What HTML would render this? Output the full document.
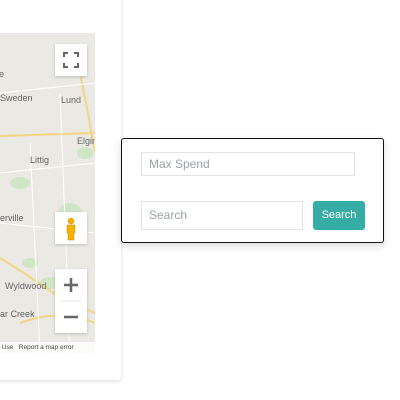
<!DOCTYPE html><html><head><style>
body{margin:0;width:400px;height:400px;background:#fff;position:relative;overflow:hidden;font-family:"Liberation Sans",sans-serif}
.card{position:absolute;left:-10px;top:-10px;width:131px;height:390px;background:#fff;box-shadow:0 1px 4px rgba(0,0,0,.15);border-radius:3px}
.map{position:absolute;left:0;top:33px;width:95px;height:320px;background:#eae9e4;overflow:hidden}
.lbl{position:absolute;font-size:9px;color:#666}
.btn{position:absolute;left:55px;width:32px;background:#fff;box-shadow:0 1px 3px rgba(0,0,0,.2)}
.panel{position:absolute;left:121px;top:138px;width:261px;height:103px;border:1px solid #111;border-radius:3px;background:#fff;box-shadow:0 3px 8px rgba(0,0,0,.15)}
.in{position:absolute;border:1px solid #e1e4e6;font-size:12px;color:#9aa3a8;padding-left:7px;box-sizing:border-box;line-height:22px}
</style></head><body>
<div class="card"></div>
<div class="map">
<svg width="95" height="320" style="position:absolute;left:0;top:0">
<g fill="#cfe5c6"><ellipse cx="70" cy="180" rx="12" ry="10"/><ellipse cx="20" cy="150" rx="10" ry="6"/><ellipse cx="50" cy="250" rx="10" ry="6"/><ellipse cx="85" cy="120" rx="8" ry="6"/><ellipse cx="30" cy="230" rx="8" ry="5"/></g>
<g stroke="#f3d583" stroke-width="2" fill="none"><path d="M0 103 L95 100"/><path d="M80 40 L88 80 L95 120"/><path d="M0 225 Q40 250 60 265 L95 280"/><path d="M20 290 Q60 275 95 290"/></g>
<g stroke="#fff" stroke-width="1" fill="none"><path d="M0 140 L95 130"/><path d="M30 110 L40 320"/><path d="M60 60 L70 320"/><path d="M0 190 L95 200"/><path d="M0 60 L95 50"/></g>
</svg>
<div class="lbl" style="left:-3px;top:36px">le</div>
<div class="lbl" style="left:0;top:60px">Sweden</div>
<div class="lbl" style="left:61px;top:62px">Lund</div>
<div class="lbl" style="left:77px;top:103px">Elgin</div>
<div class="lbl" style="left:30px;top:122px">Littig</div>
<div class="lbl" style="left:0;top:180px">erville</div>
<div class="lbl" style="left:5px;top:248px">Wyldwood</div>
<div class="lbl" style="left:0;top:276px">ar Creek</div>
<div style="position:absolute;left:0;top:309px;width:95px;height:11px;background:rgba(255,255,255,.8);font-size:6.5px;color:#444;line-height:11px;white-space:nowrap">&nbsp;Use &nbsp;&nbsp;Report a map error</div>
</div>
<div class="btn" style="top:44px;height:32px"><svg width="32" height="32"><g stroke="#666" stroke-width="2" fill="none"><path d="M9 13V9h4M19 9h4v4M23 19v4h-4M13 23H9v-4"/></g></svg></div>
<div class="btn" style="top:212px;height:32px"><svg width="32" height="32"><g fill="#f5b200" stroke="#c88a00" stroke-width=".5"><circle cx="16" cy="9" r="3"/><path d="M12 13h8v8h-1v7h-6v-7h-1z"/></g></svg></div>
<div class="btn" style="top:269px;height:64px"><svg width="32" height="64"><g stroke="#666" stroke-width="2.5"><path d="M9 16h14M16 9v14M9 48h14"/></g><path d="M6 32h20" stroke="#e6e6e6"/></svg></div>
<div class="panel"></div>
<div class="in" style="left:141px;top:152px;width:214px;height:24px">Max Spend</div>
<div class="in" style="left:141px;top:201px;width:162px;height:29px;line-height:27px">Search</div>
<div style="position:absolute;left:313px;top:201px;width:52px;height:29px;background:#36ada4;border-radius:3px;color:#fff;font-size:11px;text-align:center;line-height:29px">Search</div>
</body></html>
